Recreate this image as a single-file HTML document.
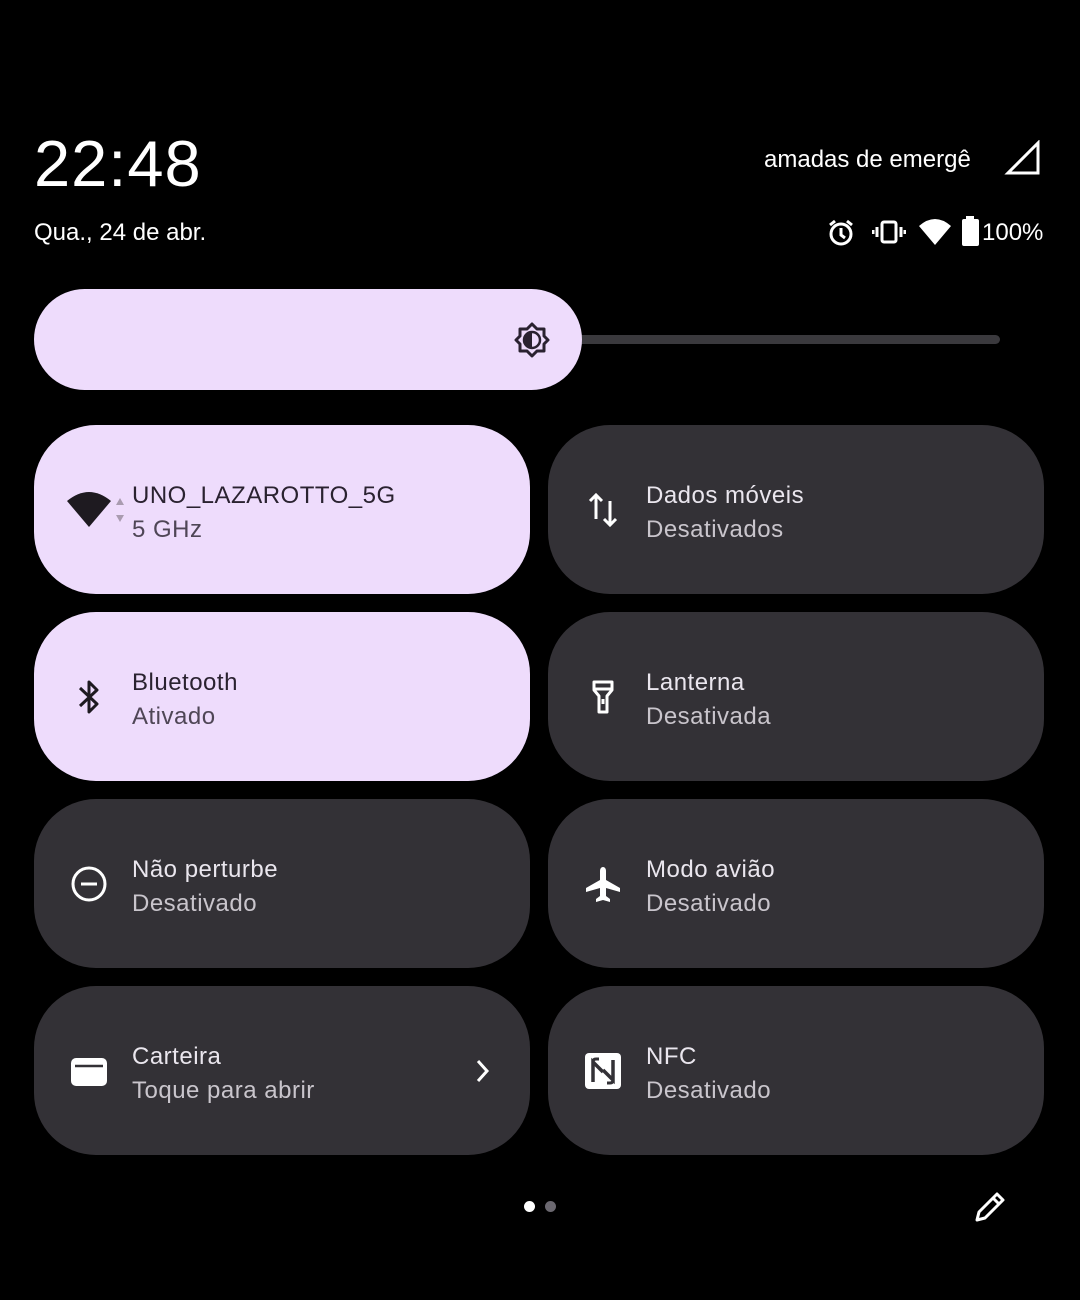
<!DOCTYPE html>
<html><head><meta charset="utf-8"><style>
body{margin:0;width:1080px;height:1300px;background:#000;position:relative;overflow:hidden;font-family:"Liberation Sans","DejaVu Sans",sans-serif;color:#fff}
.a{position:absolute}
.t{position:absolute;width:496px;height:169px;border-radius:62px;background:#333136}
.t.l{background:#eedcfc}
.tt{position:absolute;left:98px;top:57px;font-size:24px;letter-spacing:0.5px;color:#eae6ee;white-space:nowrap}
.ts{position:absolute;left:98px;top:91px;font-size:24px;letter-spacing:0.5px;color:#c9c5cc;white-space:nowrap}
.l .tt{color:#2a2230}.l .ts{color:#4f4656}
.ic{position:absolute;left:36px;top:66px;width:38px;height:38px}
</style></head><body>
<div class="a" style="left:34px;top:126px;font-size:65px;letter-spacing:1px">22:48</div>
<div class="a" style="left:34px;top:219px;font-size:24px">Qua., 24 de abr.</div>
<div class="a" style="left:764px;top:146px;font-size:24px;width:212px;overflow:hidden;white-space:nowrap">amadas de emergê</div>
<svg class="a" style="left:1004px;top:140px" width="38" height="36"><path d="M34 3 L34 33 L4 33 Z" fill="none" stroke="#fff" stroke-width="3" stroke-linejoin="miter"/></svg>
<svg class="a" style="left:826px;top:218px" width="30" height="30"><circle cx="15" cy="16" r="10" fill="none" stroke="#fff" stroke-width="3"/><path d="M15 10v7l4 3M4 7l5-4M26 7l-5-4" stroke="#fff" stroke-width="3" fill="none"/></svg>
<svg class="a" style="left:872px;top:218px" width="34" height="28"><rect x="10" y="4" width="14" height="20" rx="2" fill="none" stroke="#fff" stroke-width="3"/><path d="M5 9v10M29 9v10M1 12v4M33 12v4" stroke="#fff" stroke-width="3"/></svg>
<svg class="a" style="left:918px;top:218px" width="34" height="28"><path d="M1 8 Q17 -6 33 8 L17 27 Z" fill="#fff"/></svg>
<svg class="a" style="left:960px;top:216px" width="22" height="32"><rect x="6" y="0" width="8" height="4" fill="#fff"/><rect x="2" y="3" width="17" height="27" rx="2" fill="#fff"/></svg>
<div class="a" style="left:982px;top:219px;font-size:24px">100%</div>

<div class="a" style="left:560px;top:335px;width:440px;height:9px;border-radius:5px;background:#3a393d"></div>
<div class="a" style="left:34px;top:289px;width:548px;height:101px;border-radius:51px;background:#eedcfc"></div>
<svg class="a" style="left:514px;top:322px" width="36" height="36"><path d="M18 2 L23 7 L30 7 L30 14 L34 18 L30 22 L30 29 L23 29 L18 34 L13 29 L6 29 L6 22 L2 18 L6 14 L6 7 L13 7 Z" fill="none" stroke="#2a2230" stroke-width="3" stroke-linejoin="round"/><path d="M18 10 A8 8 0 0 0 18 26 Z" fill="#2a2230"/><circle cx="18" cy="18" r="8" fill="none" stroke="#2a2230" stroke-width="2.5"/></svg>

<div class="t l" style="left:34px;top:425px">
<svg class="ic" style="left:32px;top:64px;width:64px;height:44px" viewBox="0 0 64 44"><path d="M1 12 Q23 -6 45 12 L23 38 Z" fill="#1e1a20"/><path d="M50 16 l4 -7 l4 7Z M50 26 l4 7 l4 -7Z" fill="#a99bb0"/></svg>
<div class="tt">UNO_LAZAROTTO_5G</div><div class="ts">5 GHz</div></div>
<div class="t" style="left:548px;top:425px">
<svg class="ic" viewBox="0 0 38 38"><path d="M12 4v24M6 10l6-6 6 6M26 34V10M20 28l6 6 6-6" stroke="#fff" stroke-width="3" fill="none"/></svg>
<div class="tt">Dados móveis</div><div class="ts">Desativados</div></div>

<div class="t l" style="left:34px;top:612px">
<svg class="ic" viewBox="0 0 38 38"><path d="M10 10 L27 26 L19 34 L19 4 L27 12 L10 28" stroke="#1e1a20" stroke-width="3" fill="none" stroke-linejoin="round"/></svg>
<div class="tt">Bluetooth</div><div class="ts">Ativado</div></div>
<div class="t" style="left:548px;top:612px">
<svg class="ic" viewBox="0 0 38 38"><path d="M10 4h18v8l-5 6v16h-8V18l-5-6Z M10 11h18" stroke="#fff" stroke-width="3" fill="none" stroke-linejoin="round"/><rect x="17.5" y="21" width="3" height="5" fill="#fff"/></svg>
<div class="tt">Lanterna</div><div class="ts">Desativada</div></div>

<div class="t" style="left:34px;top:799px">
<svg class="ic" viewBox="0 0 38 38"><circle cx="19" cy="19" r="16" fill="none" stroke="#fff" stroke-width="3"/><path d="M11 19h16" stroke="#fff" stroke-width="3"/></svg>
<div class="tt">Não perturbe</div><div class="ts">Desativado</div></div>
<div class="t" style="left:548px;top:799px">
<svg class="ic" viewBox="0 0 38 38"><path d="M19 2c2 0 3 2 3 4v9l14 8v4l-14-4v8l4 3v3l-7-2-7 2v-3l4-3v-8L2 27v-4l14-8V6c0-2 1-4 3-4z" fill="#fff"/></svg>
<div class="tt">Modo avião</div><div class="ts">Desativado</div></div>

<div class="t" style="left:34px;top:986px">
<svg class="ic" viewBox="0 0 38 38"><rect x="1" y="6" width="36" height="28" rx="5" fill="#fff"/><path d="M5 14h28" stroke="#333136" stroke-width="2.5"/></svg>
<div class="tt">Carteira</div><div class="ts">Toque para abrir</div>
<svg class="a" style="left:440px;top:72px" width="18" height="26"><path d="M4 3l9 10-9 10" stroke="#fff" stroke-width="3" fill="none"/></svg></div>
<div class="t" style="left:548px;top:986px">
<svg class="ic" viewBox="0 0 38 38"><rect x="1" y="1" width="36" height="36" rx="4" fill="#fff"/><path d="M9 30V10l10 10 M29 8v20L19 18" stroke="#333136" stroke-width="3.5" fill="none"/><path d="M9 10q0-3 3-3h3 M29 28q0 3-3 3h-3" stroke="#333136" stroke-width="3" fill="none"/></svg>
<div class="tt">NFC</div><div class="ts">Desativado</div></div>

<div class="a" style="left:524px;top:1201px;width:11px;height:11px;border-radius:50%;background:#fff"></div>
<div class="a" style="left:545px;top:1201px;width:11px;height:11px;border-radius:50%;background:#6b6870"></div>
<svg class="a" style="left:972px;top:1189px" width="36" height="36"><path d="M5 31l2-8L25 5l6 6L13 29Z M21 9l6 6" stroke="#fff" stroke-width="3" fill="none" stroke-linejoin="round"/></svg>
</body></html>
